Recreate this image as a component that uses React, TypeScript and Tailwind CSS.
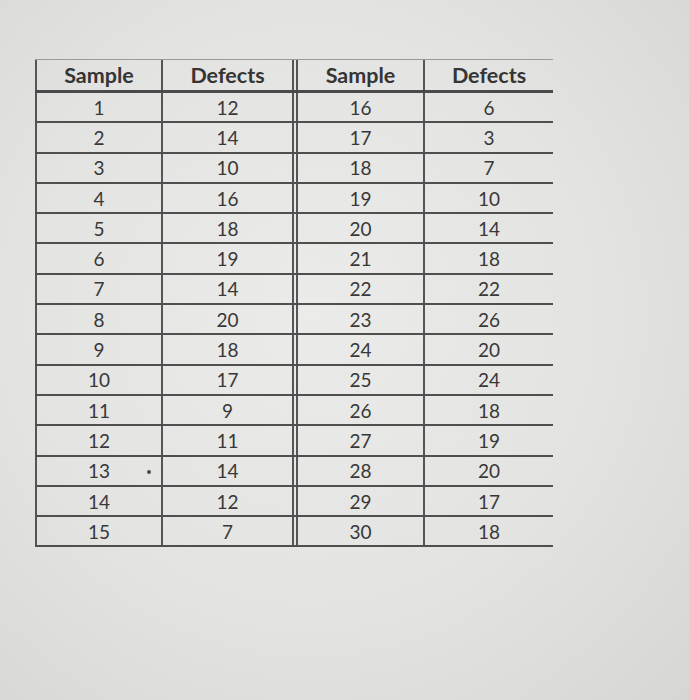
import React from 'react';

const rows: [number, number, number, number][] = [
  [1, 12, 16, 6],
  [2, 14, 17, 3],
  [3, 10, 18, 7],
  [4, 16, 19, 10],
  [5, 18, 20, 14],
  [6, 19, 21, 18],
  [7, 14, 22, 22],
  [8, 20, 23, 26],
  [9, 18, 24, 20],
  [10, 17, 25, 24],
  [11, 9, 26, 18],
  [12, 11, 27, 19],
  [13, 14, 28, 20],
  [14, 12, 29, 17],
  [15, 7, 30, 18],
];

const App: React.FC = () => {
  return (
    <div
      className="w-[689px] h-[700px] overflow-hidden bg-[radial-gradient(ellipse_at_45%_45%,#ebebe9_0%,#e3e3e1_55%,#d6d6d4_100%)] text-[#383838]"
      style={{ fontFamily: 'Lato, "Open Sans", sans-serif' }}
    >
      <div className="pt-[59px] pl-[35px]">
        <div className="w-[518px] border-t border-[#9a9a98]">
          {/* header */}
          <div className="flex h-[33px] border-b-[3px] border-[#4a4a4a] text-[21.5px] font-bold text-[#353535]">
            <div className="w-[128px] flex items-center justify-center border-l-2 border-r-2 border-[#555]">Sample</div>
            <div className="w-[135px] flex items-center justify-center border-r-[6px] border-double border-[#555]">Defects</div>
            <div className="w-[127px] flex items-center justify-center border-r-2 border-[#555]">Sample</div>
            <div className="flex-1 flex items-center justify-center">Defects</div>
          </div>
          {rows.map(([a, b, c, d]) => (
            <div key={a} className="flex h-[30.3px] border-b-2 border-[#4f4f4f] text-[19px] leading-none">
              <div className="relative w-[128px] flex items-center justify-center border-l-2 border-r-2 border-[#555]">
                {a}
                {a === 13 && <span className="absolute left-[110px] top-[13px] w-[4px] h-[4px] rounded-full bg-[#4a4a4a]" />}
              </div>
              <div className="w-[135px] flex items-center justify-center border-r-[6px] border-double border-[#555]">{b}</div>
              <div className="w-[127px] flex items-center justify-center border-r-2 border-[#555]">{c}</div>
              <div className="flex-1 flex items-center justify-center">{d}</div>
            </div>
          ))}
        </div>
      </div>
    </div>
  );
};

export default App;
